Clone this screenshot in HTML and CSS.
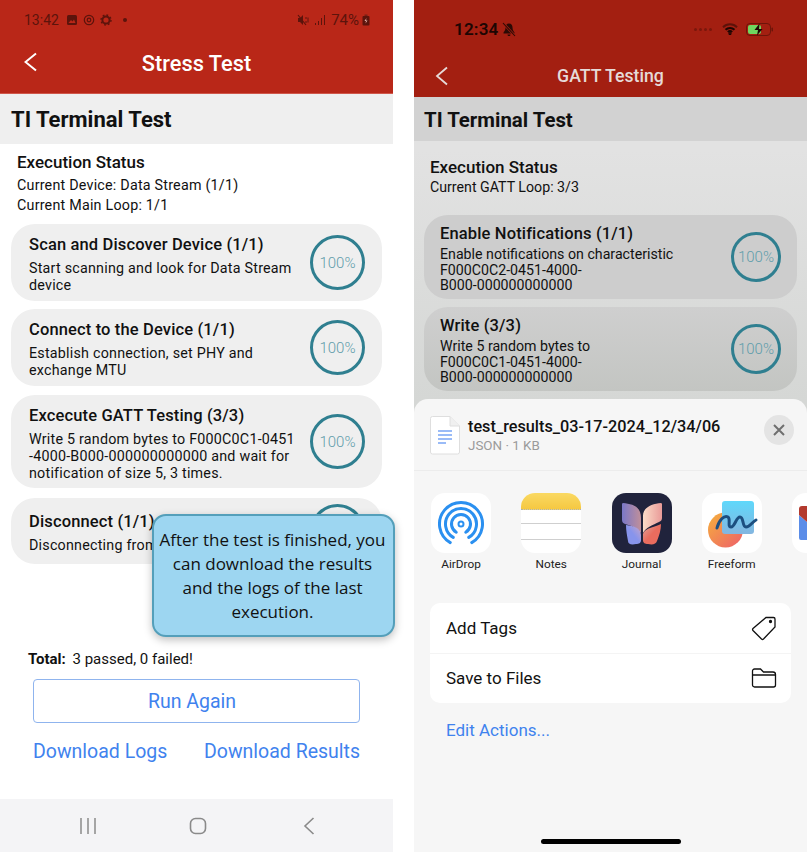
FILE: index.html
```html
<!DOCTYPE html>
<html>
<head>
    <meta charset="utf-8">
    <title>TI Terminal Test</title>
    <link rel="stylesheet" href="styles.css">
</head>

<body>
<div class="page">

    <!-- Android phone -->
    <div class="phone android">
        <div class="top_bar">
            <div class="status_bar">
                <span class="clock">13:42</span>
                <svg class="st_icon" width="12" height="12" viewBox="0 0 12 12"><rect x="1" y="1" width="10" height="10" rx="1.5" fill="#5c140c"/><path d="M2.5 9 5 6l1.5 1.5L8 5.5 9.5 9z" fill="#b92718"/></svg>
                <svg class="st_icon" width="12" height="12" viewBox="0 0 12 12" fill="none" stroke="#5c140c"><circle cx="6" cy="6" r="4.7" stroke-width="1.2"/><circle cx="6" cy="6" r="1.8" stroke-width="1.2"/></svg>
                <svg class="st_icon" width="12" height="12" viewBox="0 0 12 12" fill="none" stroke="#5c140c"><circle cx="6" cy="6" r="3.6" stroke-width="2"/><circle cx="6" cy="6" r="5" stroke-width="1.4" stroke-dasharray="1.8 2.1"/></svg>
                <span class="dot"></span>
                <span class="spacer"></span>
                <svg width="12" height="12" viewBox="0 0 12 12"><path d="M1 4h2l3-3v10L3 8H1z" fill="#5c140c"/><path d="M1 1l8 10" stroke="#5c140c" stroke-width="1.2"/><path d="M9 3v2M9 7v2M11 3.500v5" stroke="#5c140c"/></svg>
                <svg class="signal" width="11" height="12" viewBox="0 0 11 12" fill="#5c140c"><rect x="0" y="9" width="1" height="2"/><rect x="3" y="7" width="1" height="4"/><rect x="6" y="4" width="1" height="7"/><rect x="9" y="1" width="1" height="10"/></svg>
                <span class="battery_text">74%</span>
                <svg width="8" height="12" viewBox="0 0 8 12"><rect x="2.500" y="0.500" width="3" height="2" fill="#7a2015"/><rect x="0.500" y="2" width="7" height="9.500" rx="1" fill="#5c140c"/><path d="M4.500 4 2.500 7h1.500L3.500 9.500 5.500 6.500H4z" fill="#e0b0a8"/></svg>
            </div>
            <div class="nav_bar">
                <svg width="14" height="20" viewBox="0 0 14 20" fill="none" stroke="#fff" stroke-width="2"><path d="M13 1.500 2.500 10 13 18.500" transform="translate(-1 0)"/></svg>
                <span class="nav_title">Stress Test</span>
                <span></span>
            </div>
        </div>
        <div class="title_bar">TI Terminal Test</div>

        <div class="exec_status">
            <h3>Execution Status</h3>
            <p>Current Device: Data Stream (1/1)</p>
            <p>Current Main Loop: 1/1</p>
        </div>

        <div class="step_list">
            <div class="step step_scan">
                <div class="step_text">
                    <h4>Scan and Discover Device (1/1)</h4>
                    <p>Start scanning and look for Data Stream device</p>
                </div>
                <div class="ring">100%</div>
            </div>
            <div class="step step_connect">
                <div class="step_text">
                    <h4>Connect to the Device (1/1)</h4>
                    <p>Establish connection, set PHY and exchange MTU</p>
                </div>
                <div class="ring">100%</div>
            </div>
            <div class="step step_gatt">
                <div class="step_text">
                    <h4>Excecute GATT Testing (3/3)</h4>
                    <p>Write 5 random bytes to F000C0C1-0451<br>-4000-B000-000000000000 and wait for<br>notification of size 5, 3 times.</p>
                </div>
                <div class="ring">100%</div>
            </div>
            <div class="step step_disc">
                <div class="step_text">
                    <h4>Disconnect (1/1)</h4>
                    <p>Disconnecting from</p>
                </div>
                <div class="ring"></div>
            </div>
        </div>

        <div class="total"><b>Total:</b> 3 passed, 0 failed!</div>
        <button class="run_again">Run Again</button>
        <div class="downloads">
            <a>Download Logs</a>
            <a>Download Results</a>
        </div>

        <div class="android_nav">
            <svg width="18" height="18" viewBox="0 0 18 18" stroke="#8a8a8a" stroke-width="1.500"><path d="M2 1v16M9 1v16M16 1v16"/></svg>
            <svg width="18" height="18" viewBox="0 0 18 18" fill="none" stroke="#8a8a8a" stroke-width="1.600"><rect x="1.500" y="1.500" width="15" height="15" rx="5"/></svg>
            <svg width="12" height="18" viewBox="0 0 12 18" fill="none" stroke="#8a8a8a" stroke-width="1.600"><path d="M10.500 1 2 9l8.500 8"/></svg>
        </div>
    </div>

    <!-- iPhone -->
    <div class="phone ios">
        <div class="top_bar">
            <div class="status_bar">
                <span class="clock">12:34</span>
                <svg width="14" height="15" viewBox="0 0 14 15" fill="#2a0a05"><path d="M7 1.500C4.500 1.500 3.500 3.500 3.500 5.500c0 3-1.500 4-2 5v1h11v-1c-.5-1-2-2-2-5 0-2-1-4-3.500-4zM5.500 12.500h3C8.500 13.500 7.800 14 7 14s-1.500-.5-1.500-1.500z"/><path d="M1 1l12 13" stroke="#a31f11" stroke-width="2.500"/><path d="M1 1l12 13" stroke="#2a0a05" stroke-width="1.100"/></svg>
                <span class="spacer"></span>
                <span class="ios_dots"><i></i><i></i><i></i><i></i></span>
                <svg class="wifi" width="16" height="12" viewBox="0 0 16 12" fill="none" stroke="#1d0603" stroke-width="2"><path d="M1 4.200a10 10 0 0 1 14 0" stroke="#5d1209"/><path d="M3.500 6.800a6.500 6.500 0 0 1 9 0"/><path d="M5.800 9a3.200 3.200 0 0 1 4.400 0"/><circle cx="8" cy="10.600" r=".6"/></svg>
                <svg width="28" height="13" viewBox="0 0 28 13"><rect x=".5" y=".5" width="24" height="12" rx="3.500" fill="none" stroke="#6d1509"/><rect x="2" y="2" width="13" height="9" rx="2" fill="#6fd65f"/><rect x="25.500" y="4.500" width="1.500" height="4" rx=".7" fill="#6d1509"/><path d="M13.500 .5 8.500 7h3.500l-1 5.500L16.500 6H13z" fill="#1d0603"/></svg>
            </div>
            <div class="nav_bar">
                <svg width="14" height="20" viewBox="0 0 14 20" fill="none" stroke="#e6dad8" stroke-width="1.800"><path d="M12 1.500 2 10l10 8.500"/></svg>
                <span class="nav_title">GATT Testing</span>
                <span></span>
            </div>
        </div>
        <div class="title_bar">TI Terminal Test</div>

        <div class="exec_status">
            <h3>Execution Status</h3>
            <p>Current GATT Loop: 3/3</p>
        </div>

        <div class="step_list">
            <div class="step">
                <div class="step_text">
                    <h4>Enable Notifications (1/1)</h4>
                    <p>Enable notifications on characteristic<br>F000C0C2-0451-4000-<br>B000-000000000000</p>
                </div>
                <div class="ring">100%</div>
            </div>
            <div class="step step_write">
                <div class="step_text">
                    <h4>Write (3/3)</h4>
                    <p>Write 5 random bytes to<br>F000C0C1-0451-4000-<br>B000-000000000000</p>
                </div>
                <div class="ring">100%</div>
            </div>
        </div>

        <!-- share sheet -->
        <div class="sheet">
            <div class="sheet_head">
                <svg width="30" height="39" viewBox="0 0 30 39"><path d="M2.500 .5H20L29.500 10v26a2 2 0 0 1-2 2h-25a2 2 0 0 1-2-2V2.500a2 2 0 0 1 2-2z" fill="#fff" stroke="#dedede"/><path d="M20 .5V10h9.500" fill="#f0f0f0" stroke="#dedede"/><path d="M8 15h14M8 19h14M8 23h14M8 27h8" stroke="#7aa5f5" stroke-width="1.500"/></svg>
                <div class="file_info">
                    <div class="file_name">test_results_03-17-2024_12/34/06</div>
                    <div class="file_meta">JSON · 1 KB</div>
                </div>
                <div class="close_btn">
                    <svg width="12" height="12" viewBox="0 0 12 12" stroke="#6f6f6f" stroke-width="2"><path d="M1 1l10 10M11 1 1 11"/></svg>
                </div>
            </div>

            <div class="app_row">
                <div class="app">
                    <div class="app_icon">
                        <svg width="60" height="60" viewBox="0 0 60 60" fill="none" stroke="#2b90f0" stroke-linecap="round"><g stroke-width="3"><path d="M19.250 49.600A21.500 21.500 0 1 1 40.750 49.600"/><path d="M22.250 44.400A15.500 15.500 0 1 1 37.750 44.400"/><path d="M25.250 39.200A9.500 9.500 0 1 1 34.750 39.200"/></g><circle cx="30" cy="31" r="2.500" stroke-width="2"/></svg>
                    </div>
                    <span>AirDrop</span>
                </div>
                <div class="app">
                    <div class="app_icon notes_icon">
                        <div class="notes_top"></div>
                        <div class="notes_line"></div>
                        <div class="notes_line"></div>
                    </div>
                    <span>Notes</span>
                </div>
                <div class="app">
                    <div class="app_icon journal_icon">
                        <svg width="60" height="60" viewBox="0 0 60 60">
                            <defs>
                                <linearGradient id="wing_a" x1="0" x2="1"><stop offset="0" stop-color="#7a78c8"/><stop offset="1" stop-color="#c08f9a"/></linearGradient>
                                <linearGradient id="wing_b" x1="0" x2="1"><stop offset="0" stop-color="#fbdcc8"/><stop offset="1" stop-color="#e99a98"/></linearGradient>
                                <linearGradient id="wing_c" x1="1" y1="0" x2="0" y2="1"><stop offset="0" stop-color="#c9a6c8"/><stop offset=".5" stop-color="#8794ec"/></linearGradient>
                                <linearGradient id="wing_d" x1="0" y1="0" x2="1" y2="1"><stop offset="0" stop-color="#e0a8a0"/><stop offset=".5" stop-color="#e96c5e"/></linearGradient>
                            </defs>
                            <path d="M11 10c9 1 18 3 18 15v15c-3-5-9-7-16-9-2-1-3-2-3-4V12c0-1 0-2 1-2z" fill="url(#wing_a)"/>
                            <path d="M49 10c-9 1-18 4-18 13v17c3-6 10-8 16-11 2-1 3-2 3-4V12c0-1 0-2-1-2z" fill="url(#wing_b)"/>
                            <path d="M14 32c8 1 15 3 15 10v5c0 3-2 4-5 4-5 1-8 0-8-3-1-5-2-11-2-16z" fill="url(#wing_c)"/>
                            <path d="M49 31c-5 3-18 4-18 11v5c0 3 2 4 5 4 5 1 8 0 9-3 2-5 4-11 4-17z" fill="url(#wing_d)"/>
                        </svg>
                    </div>
                    <span>Journal</span>
                </div>
                <div class="app">
                    <div class="app_icon">
                        <svg width="60" height="60" viewBox="0 0 60 60" fill="none">
                            <defs>
                                <linearGradient id="sun" x1="0" y1="0" x2="1" y2="1"><stop offset="0" stop-color="#f5b13c"/><stop offset="1" stop-color="#ee5f6a"/></linearGradient>
                                <linearGradient id="sheet_blue" x1="0" y1="0" x2="0" y2="1"><stop offset="0" stop-color="#5fd8fb"/><stop offset="1" stop-color="#84b6e0"/></linearGradient>
                            </defs>
                            <circle cx="23.500" cy="37" r="17.500" fill="url(#sun)"/>
                            <rect x="20" y="8" width="32" height="33" rx="3" fill="url(#sheet_blue)"/>
                            <path d="M15 35C17 27 22 22 26 24C29 26 25 34 29 34C33 34 34 24 38 24C42 24 40 34 44 34C48 34 50 29 54 27" stroke="#1c4f80" stroke-width="3" stroke-linecap="round"/>
                        </svg>
                    </div>
                    <span>Freeform</span>
                </div>
                <div class="app">
                    <div class="app_icon">
                        <svg width="60" height="60" viewBox="0 0 60 60"><path d="M7 22l8 7h15v18H9a2 2 0 0 1-2-2z" fill="#5b8de8"/><path d="M7 22v-6a3 3 0 0 1 3-3h5v16z" fill="#b33a2e"/></svg>
                    </div>
                </div>
            </div>

            <div class="action_list">
                <div class="action_row">
                    <span>Add Tags</span>
                    <svg width="26" height="26" viewBox="0 0 26 26" fill="none" stroke="#111" stroke-width="1.300"><path d="M15 2.500h7.500a1.500 1.500 0 0 1 1.500 1.500v8L12.500 24a1.500 1.500 0 0 1-2 0L2 15.500a1.500 1.500 0 0 1 0-2z"/><circle cx="19.500" cy="6.500" r="1" fill="#111"/></svg>
                </div>
                <div class="action_row">
                    <span>Save to Files</span>
                    <svg width="26" height="20" viewBox="0 0 26 20" fill="none" stroke="#111" stroke-width="1.300"><path d="M1.500 17V3a2 2 0 0 1 2-2h6l3 3h9.500a2.500 2.500 0 0 1 2.500 2.500V17a2 2 0 0 1-2 2h-19a2 2 0 0 1-2-2z"/><path d="M1.500 7h23"/></svg>
                </div>
            </div>
            <a class="edit_actions">Edit Actions...</a>
            <div class="home_indicator"></div>
        </div>
    </div>

    <!-- callout over the left phone -->
    <div class="callout">After the test is finished, you can download the results and the logs of the last execution.</div>
</div>
</body>

</html>
```

FILE: styles.css
```css
/* General page */
html, body {
    margin: 0;
    padding: 0;
    background-color: #fff;
}

body {
    font-family: Roboto, "Liberation Sans", sans-serif;
    color: #111;
}

.page {
    position: relative;
    display: flex;
    gap: 21px;
    width: 807px;
    height: 852px;
    overflow: hidden;
}

.phone {
    position: relative;
    display: flex;
    flex-direction: column;
    width: 393px;
    height: 852px;
    overflow: hidden;
}

h3, h4, p {
    margin: 0;
}

.status_bar {
    display: flex;
    align-items: center;
}

.spacer {
    flex: 1;
}

.nav_bar {
    display: grid;
    grid-template-columns: 60px 1fr 60px;
    align-items: center;
}

.nav_title {
    text-align: center;
}

/* Steps */
.step_list {
    display: flex;
    flex-direction: column;
}

.step {
    display: flex;
    align-items: center;
    justify-content: space-between;
    box-sizing: border-box;
    border-radius: 24px;
}

.step h4 {
    font-size: 16.500px;
    font-weight: 500;
    letter-spacing: .14px;
}

.ring {
    display: flex;
    align-items: center;
    justify-content: center;
    flex: none;
    box-sizing: border-box;
    border-radius: 50%;
    border: 3px solid #2f7f90;
    color: #5f9dab;
    font-size: 15px;
    font-weight: 300;
}

/* Left phone */
.android .top_bar {
    background-color: #b92718;
    height: 93px;
    border-bottom: 1px solid #d0574a;
}

.android .status_bar {
    height: 40px;
    padding: 0 23px 0 24px;
    gap: 5px;
    color: #5c140c;
    font-size: 14px;
}

.android .clock {
    margin-right: 2px;
}

.android .dot {
    width: 4px;
    height: 4px;
    margin-left: 6px;
    border-radius: 50%;
    background-color: #5c140c;
}

.android .signal {
    margin-left: 1px;
}

.android .battery_text {
    margin-right: -2px;
    font-size: 15px;
}

.android .nav_bar {
    height: 44px;
    padding-left: 24px;
    grid-template-columns: 36px 1fr 60px;
}

.android .nav_title {
    padding-top: 2px;
    color: #fff;
    font-size: 21.800px;
    font-weight: 500;
}

.android .title_bar {
    height: 50px;
    padding-left: 11px;
    background-color: #efefef;
    font-size: 22px;
    font-weight: 700;
    line-height: 51px;
}

.android .exec_status {
    height: 80px;
    box-sizing: border-box;
    padding: 9px 0 0 17px;
}

.android .exec_status h3 {
    font-size: 17px;
    font-weight: 500;
    line-height: 19px;
    margin-bottom: 3px;
}

.android .exec_status p {
    font-size: 14.300px;
    letter-spacing: .22px;
    line-height: 20px;
}

.android .step_list {
    gap: 8px;
    margin: 0 11px;
}

.android .step {
    background-color: #efefef;
    padding: 0 17px 0 18px;
}

.android .step_scan,
.android .step_connect {
    height: 77px;
}

.android .step_gatt {
    height: 93px;
    margin-top: 1px;
}

.android .step_disc {
    height: 66px;
    margin-top: 2px;
}

.android .step_text {
    width: 270px;
    padding-top: 3px;
}

.android .step h4 {
    line-height: 22px;
}

.android .step p {
    margin-top: 4px;
    font-size: 14.300px;
    letter-spacing: .22px;
    line-height: 17px;
}

.android .ring {
    width: 55px;
    height: 55px;
}

.total {
    margin: 86px 0 0 28px;
    font-size: 15px;
    line-height: 18px;
}

.total b {
    font-weight: 700;
    margin-right: 3px;
}

.run_again {
    width: 327px;
    height: 44px;
    margin: 11px 0 0 33px;
    padding: 0 9px 0 0;
    border: 1px solid #8fb4ee;
    border-radius: 4px;
    background-color: #fff;
    color: #3f82ee;
    font-family: inherit;
    font-size: 19.500px;
}

.downloads {
    display: flex;
    justify-content: space-between;
    width: 327px;
    margin: 17px 0 0 33px;
    color: #3f82ee;
    font-size: 19.500px;
    line-height: 24px;
}

.android_nav {
    display: flex;
    align-items: center;
    gap: 92px;
    position: absolute;
    left: 0;
    right: 0;
    bottom: 0;
    height: 53px;
    padding-left: 79px;
    box-sizing: border-box;
    background-color: #f4f4f6;
}

.android_nav svg:last-child {
    margin-left: 4px;
}

/* Right phone */
.ios {
    background: linear-gradient(#e2e2e2 150px, #d5d7d5 400px);
}

.ios .top_bar {
    background-color: #a31f11;
    height: 97px;
}

.ios .status_bar {
    height: 58px;
    padding: 0 33px 0 40px;
    gap: 4px;
}

.ios .clock {
    color: #1d0603;
    font-size: 17px;
    font-weight: 600;
    letter-spacing: .2px;
}

.ios_dots {
    display: flex;
    gap: 2px;
    margin-right: 6px;
}

.ios_dots i {
    width: 3px;
    height: 3px;
    border-radius: 50%;
    background-color: #7a170c;
}

.ios .wifi {
    margin-right: 4px;
}

.ios .nav_bar {
    height: 36px;
    padding-left: 21px;
    grid-template-columns: 39px 1fr 60px;
}

.ios .nav_title {
    color: #e6dad8;
    font-size: 17.700px;
    font-weight: 500;
}

.ios .title_bar {
    height: 44px;
    padding-left: 10px;
    background-color: #d2d2d2;
    font-size: 20.400px;
    font-weight: 700;
    line-height: 46px;
}

.ios .exec_status {
    height: 74px;
    box-sizing: border-box;
    padding: 17px 0 0 16px;
}

.ios .exec_status h3 {
    font-size: 17px;
    font-weight: 500;
    line-height: 19px;
    margin-bottom: 1px;
}

.ios .exec_status p {
    font-size: 14.200px;
    line-height: 18px;
}

.ios .step_list {
    gap: 8px;
    margin: 0 10px;
}

.ios .step {
    height: 84px;
    padding: 0 16px;
    background-color: #cdcdcd;
}

.ios .step_write {
    background: linear-gradient(#cfcfcf, #c3c5c2);
}

.ios .step_text {
    padding-top: 4px;
}

.ios .step h4 {
    line-height: 20px;
}

.ios .step p {
    margin-top: 3px;
    font-size: 14.200px;
    line-height: 15.500px;
}

.ios .ring {
    width: 50px;
    height: 50px;
}

/* Share sheet */
.sheet {
    position: absolute;
    left: 0;
    right: 0;
    top: 399px;
    bottom: 0;
    overflow: hidden;
    border-radius: 14px 14px 0 0;
    background-color: #f6f6f6;
}

.sheet_head {
    display: flex;
    align-items: center;
    gap: 8px;
    height: 72px;
    box-sizing: border-box;
    padding: 2px 13px 0 16px;
    border-bottom: 1px solid #ececec;
}

.file_info {
    flex: 1;
}

.file_name {
    font-size: 16.250px;
    font-weight: 500;
    line-height: 20px;
}

.file_meta {
    margin-top: 1px;
    color: #9a9a9a;
    font-size: 13.400px;
    line-height: 16px;
}

.close_btn {
    display: flex;
    align-items: center;
    justify-content: center;
    width: 30px;
    height: 30px;
    margin-top: -12px;
    border-radius: 50%;
    background-color: #e4e4e4;
}

.app_row {
    display: flex;
    gap: 30.250px;
    margin: 22px 0 0 17px;
}

.app {
    display: flex;
    flex-direction: column;
    align-items: center;
    flex: none;
    width: 60px;
    font-size: 11.800px;
    color: #222;
}

.app span {
    margin-top: 4px;
    line-height: 14px;
}

.app_icon {
    width: 60px;
    height: 60px;
    overflow: hidden;
    border-radius: 14px;
    background-color: #fff;
}

.notes_icon {
    display: flex;
    flex-direction: column;
}

.notes_top {
    height: 16px;
    background: linear-gradient(#fad962, #f5c842);
    border-bottom: 1px dotted #b0b0b0;
}

.notes_line {
    height: 13px;
    border-bottom: 1px solid #cfcfcf;
}

.notes_line:last-child {
    height: 15px;
}

.journal_icon {
    background-color: #20233c;
}

.action_list {
    width: 361px;
    margin: 32px 0 0 16px;
    overflow: hidden;
    border-radius: 10px;
    background-color: #fff;
}

.action_row {
    display: flex;
    align-items: center;
    justify-content: space-between;
    height: 50px;
    box-sizing: border-box;
    padding: 0 14px 0 16px;
    font-size: 17px;
}

.action_row + .action_row {
    padding-bottom: 1px;
    border-top: 1px solid #f4f4f4;
}

.edit_actions {
    display: block;
    margin: 17px 0 0 32px;
    color: #3f82ee;
    font-size: 17px;
    line-height: 20px;
}

.home_indicator {
    position: absolute;
    left: 127px;
    bottom: 8px;
    width: 140px;
    height: 5px;
    border-radius: 3px;
    background-color: #000;
}

/* Callout */
.callout {
    position: absolute;
    left: 152px;
    top: 514px;
    width: 243px;
    height: 123px;
    box-sizing: border-box;
    padding: 12px 5px 12px 3px;
    border: 2px solid #549fba;
    border-radius: 14px;
    background-color: #9dd6f1;
    box-shadow: 0 3px 8px rgba(0, 0, 0, 0.25);
    color: #111;
    font-family: "Open Sans", sans-serif;
    font-size: 17px;
    line-height: 24px;
    text-align: center;
}
```
